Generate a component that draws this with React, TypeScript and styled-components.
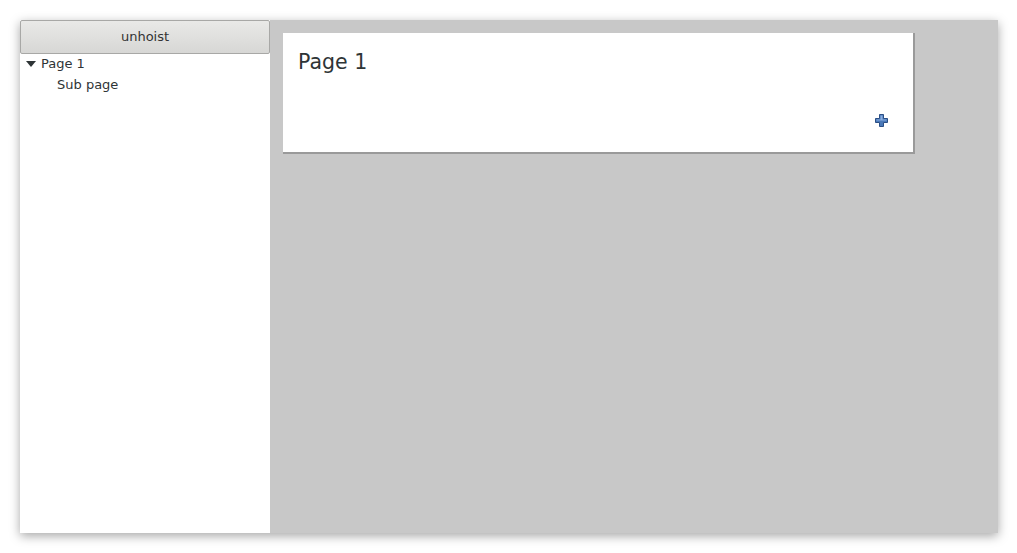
import React from "react";
import styled, { createGlobalStyle } from "styled-components";

const Global = createGlobalStyle`
  html, body { margin: 0; padding: 0; background: #ffffff; }
  body { font-family: "DejaVu Sans", Verdana, sans-serif; }
`;

const Page = styled.div`
  width: 1017px;
  height: 553px;
  padding: 20px 19px 20px 20px;
  box-sizing: border-box;
`;

const Window = styled.div`
  display: flex;
  width: 978px;
  height: 513px;
  box-shadow: 0 3px 10px rgba(0, 0, 0, 0.35);
`;

const Sidebar = styled.div`
  width: 250px;
  background: #ffffff;
  display: flex;
  flex-direction: column;
`;

const UnhoistButton = styled.button`
  height: 34px;
  width: 250px;
  margin: 0;
  border: 1px solid #a8a8a6;
  border-radius: 2px;
  background: linear-gradient(#e9e9e7, #d7d7d5);
  font-family: "DejaVu Sans", sans-serif;
  font-size: 13px;
  color: #333;
  padding: 0 0 2px 0;
  box-sizing: border-box;
`;

const Tree = styled.ul`
  list-style: none;
  margin: 0;
  padding: 0;
`;

const Row = styled.li<{ $depth: number }>`
  display: flex;
  align-items: center;
  height: 21px;
  box-sizing: border-box;
  padding-bottom: 2px;
  padding-left: ${(p) => 5 + p.$depth * 16}px;
  font-size: 13px;
  color: #2e3436;
`;

const Toggle = styled.span`
  width: 16px;
  display: inline-flex;
  align-items: center;
  justify-content: flex-start;
  padding-left: 1px;
  box-sizing: border-box;
`;

const Main = styled.div`
  flex: 1;
  background: #c8c8c8;
  padding: 13px 0 0 13px;
`;

const Card = styled.div`
  width: 632px;
  height: 121px;
  box-sizing: border-box;
  background: #ffffff;
  border-right: 2px solid #9a9a9a;
  border-bottom: 2px solid #9a9a9a;
  padding: 16px 0 0 15px;
  position: relative;
`;

const Title = styled.div`
  font-size: 20.5px;
  color: #2e3436;
  line-height: 26px;
`;

const AddButton = styled.span`
  position: absolute;
  left: 592px;
  top: 81px;
  width: 13px;
  height: 13px;
  display: flex;
`;

export default function App() {
  return (
    <>
      <Global />
      <Page>
        <Window>
          <Sidebar>
            <UnhoistButton>unhoist</UnhoistButton>
            <Tree>
              <Row $depth={0}>
                <Toggle>
                  <svg width="10" height="6" viewBox="0 0 10 6">
                    <path d="M0 0 L10 0 L5 6 Z" fill="#2e3436" />
                  </svg>
                </Toggle>
                Page 1
              </Row>
              <Row $depth={1}>
                <Toggle />
                Sub page
              </Row>
            </Tree>
          </Sidebar>
          <Main>
            <Card>
              <Title>Page 1</Title>
              <AddButton>
                <svg width="13" height="13" viewBox="0 0 13 13">
                  <path
                    d="M4.5 0.5 H8.5 V4.5 H12.5 V8.5 H8.5 V12.5 H4.5 V8.5 H0.5 V4.5 H4.5 Z"
                    fill="#4a78b8"
                    stroke="#2b4f85"
                    strokeWidth="1"
                  />
                  <path d="M5.5 1.5 H7.5 V5.5 H11.5 V6.5 H1.5 V5.5 H5.5 Z" fill="#8aaee0" />
                </svg>
              </AddButton>
            </Card>
          </Main>
        </Window>
      </Page>
    </>
  );
}
